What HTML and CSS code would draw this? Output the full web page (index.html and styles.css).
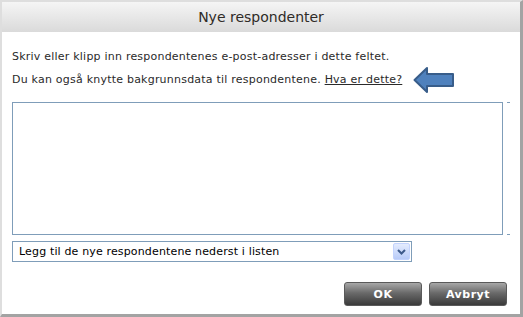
FILE: index.html
```html
<!DOCTYPE html>
<html lang="no">
<head>
  <meta charset="UTF-8" />
  <title>Nye respondenter</title>
  <link rel="stylesheet" href="styles.css">
</head>
<body>
  <div class="dialog">
    <div class="header">Nye respondenter</div>

    <div class="content">
      <p class="intro">Skriv eller klipp inn respondentenes e-post-adresser i dette feltet.</p>
      <p class="intro second">Du kan også knytte bakgrunnsdata til respondentene. <a href="#">Hva er dette?</a></p>

      <svg class="pointer" width="42" height="28" viewBox="0 0 42 28">
        <path d="M1.5 14 L14 2 L14 8 L40 8 L40 20 L14 20 L14 26 Z" fill="#4f81bd" stroke="#385d8a" stroke-width="2" stroke-linejoin="round"/>
      </svg>

      <div class="area-wrap">
        <textarea class="emails"></textarea>
      </div>

      <div class="select">
        <span>Legg til de nye respondentene nederst i listen</span>
        <span class="select-btn">
          <svg width="9" height="6" viewBox="0 0 9 6"><path d="M1 1 L4.5 4.5 L8 1" fill="none" stroke="#3d5a8a" stroke-width="2"/></svg>
        </span>
      </div>

      <div class="buttons">
        <button class="btn">OK</button>
        <button class="btn">Avbryt</button>
      </div>
    </div>
  </div>
</body>
</html>
```

FILE: styles.css
```css
html, body {
  margin: 0;
  padding: 0;
  background: #fff;
}

.dialog {
  position: relative;
  width: 523px;
  height: 317px;
  box-sizing: border-box;
  border-top: 2px solid #dedede;
  border-left: 2px solid #dedede;
  border-right: 3px solid #a3a3a3;
  border-bottom: 3px solid #a3a3a3;
  font-family: "DejaVu Sans", Verdana, sans-serif;
  color: #333;
}

.header {
  height: 30px;
  line-height: 30px;
  text-align: center;
  font-size: 14px;
  color: #2f2b27;
  background: linear-gradient(#f5f5f5, #dadada);
}

.content {
  padding: 0 13px 0 10px;
}

.intro {
  margin: 17px 0 0;
  font-size: 11px;
  line-height: 16px;
  letter-spacing: 0.22px;
  color: #2a2a2a;
}

.intro.second {
  margin-top: 7px;
}

.intro a {
  color: #2a2a2a;
}

.pointer {
  position: absolute;
  left: 411px;
  top: 64px;
}

.area-wrap {
  position: relative;
  margin-top: 14px;
  width: 491px;
}

.area-wrap::before,
.area-wrap::after {
  content: "";
  position: absolute;
  right: -7px;
  width: 3px;
  height: 1px;
  background: #7f9db9;
}

.area-wrap::before { top: 0; }
.area-wrap::after { bottom: 0; }

.emails {
  display: block;
  width: 491px;
  height: 133px;
  box-sizing: border-box;
  border: 1px solid #7f9db9;
  resize: none;
  margin: 0;
  outline: none;
}

.select {
  margin-top: 6px;
  width: 400px;
  height: 21px;
  box-sizing: border-box;
  border: 1px solid #7f9db9;
  display: flex;
  align-items: center;
  justify-content: space-between;
  padding: 0 1px 0 6px;
  font-size: 11px;
  letter-spacing: 0.15px;
  color: #000;
}

.select-btn {
  width: 17px;
  height: 17px;
  box-sizing: border-box;
  border: 1px solid #c3d3fd;
  border-radius: 2px;
  background: linear-gradient(#e4ecfe, #b8cbf8);
  display: flex;
  align-items: center;
  justify-content: center;
}

.buttons {
  margin-top: 20px;
  display: flex;
  justify-content: flex-end;
  gap: 7px;
}

.btn {
  width: 78px;
  height: 24px;
  border: 1px solid #5a5a5a;
  border-radius: 3px;
  background: linear-gradient(#a8a8a8, #6a6a6a 45%, #3a3a3a);
  color: #fff;
  font-family: "DejaVu Sans", Verdana, sans-serif;
  font-weight: bold;
  font-size: 11px;
  letter-spacing: 0.5px;
  padding: 0;
}
```
